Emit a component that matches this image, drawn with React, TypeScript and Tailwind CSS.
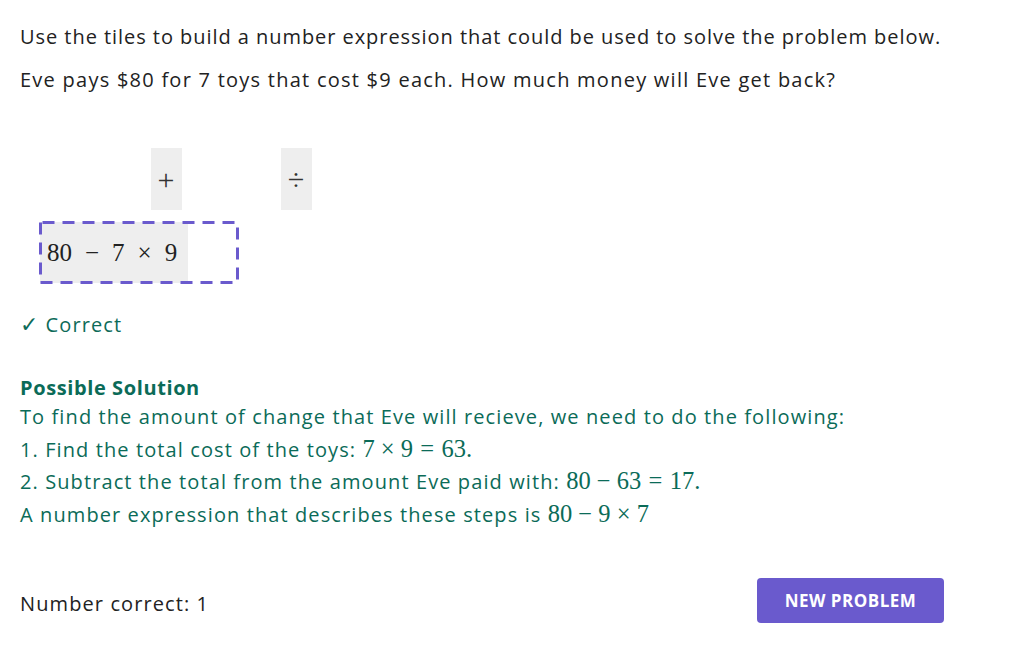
import React from "react";

const sans = { fontFamily: '"Open Sans", "DejaVu Sans", sans-serif' };
const serif = { fontFamily: '"Liberation Serif", "DejaVu Serif", serif' };

function B({ children }: { children: React.ReactNode }) {
  return <span className="mx-[0.25em]">{children}</span>;
}
function R({ children }: { children: React.ReactNode }) {
  return <span className="mx-[0.3em]">{children}</span>;
}
function M({ children }: { children: React.ReactNode }) {
  return (
    <span style={serif} className="text-[24.5px] leading-[20px] tracking-normal">
      {children}
    </span>
  );
}

export default function App() {
  return (
    <div className="w-[1032px] h-[645px] bg-white text-[#222] overflow-hidden tracking-[1.1px] whitespace-nowrap" style={sans}>
      <div className="pl-5 w-[944px]">
        <p className="pt-[23px] text-[20px] leading-[28px] tracking-[0.95px]">
          Use the tiles to build a number expression that could be used to solve the problem below.
        </p>
        <p className="mt-[15px] text-[20px] leading-[28px] tracking-[1.25px]">
          Eve pays $80 for 7 toys that cost $9 each. How much money will Eve get back?
        </p>

        <div className="mt-[54px] flex h-[62px]">
          <div className="ml-[131px] w-[31px] h-[62px] bg-[#eeeeee] flex items-center justify-center text-[30px] text-[#333]" style={serif}>
            +
          </div>
          <div className="ml-[99px] w-[31px] h-[62px] bg-[#eeeeee] flex items-center justify-center text-[30px] text-[#333]" style={serif}>
            ÷
          </div>
        </div>

        <div className="mt-[11px] ml-[19px] relative w-[200px] h-[63px] p-[1px]">
          <div className="w-[148px] h-[61px] bg-[#eeeeee] flex items-center pl-[7px] gap-[13px] text-[25px] text-[#222] tracking-normal" style={serif}>
            <span>80</span>
            <span>−</span>
            <span>7</span>
            <span>×</span>
            <span>9</span>
          </div>
          <svg className="absolute inset-0" width="200" height="63" viewBox="0 0 200 63">
            <rect x="1.5" y="1.5" width="197" height="60" fill="none" stroke="#6a5acd" strokeWidth="3" strokeDasharray="12 8" strokeDashoffset="-2" />
          </svg>
        </div>

        <p className="mt-[27px] text-[20px] leading-[28px] text-[#0d6b59]">
          <span style={{ fontFamily: '"DejaVu Sans", sans-serif' }} className="text-[22px] mr-[6px]">✓</span>Correct
        </p>

        <div className="mt-[35px] text-[#0b6b58]">
          <p className="text-[20px] leading-[27px] font-bold tracking-[0.6px]">Possible Solution</p>
          <p className="text-[20px] leading-[32.5px]">
            To find the amount of change that Eve will recieve, we need to do the following:
          </p>
          <p className="text-[20px] leading-[32.5px]">
            1. Find the total cost of the toys: <M>7<B>×</B>9<R>=</R>63.</M>
          </p>
          <p className="text-[20px] leading-[32.5px]">
            2. Subtract the total from the amount Eve paid with: <M>80<B>−</B>63<R>=</R>17.</M>
          </p>
          <p className="text-[20px] leading-[32.5px]">
            A number expression that describes these steps is <M>80<B>−</B>9<B>×</B>7</M>
          </p>
        </div>

        <div className="mt-[47px] flex items-center justify-between">
          <p className="text-[20px] leading-[28px] mt-[6px]">Number correct: 1</p>
          <button
            className="h-[45px] w-[187px] rounded-[4px] bg-[#6a5acd] text-white text-[17px] font-bold tracking-[0.5px] uppercase"
            style={{ fontFamily: '"Open Sans", sans-serif' }}
          >
            New Problem
          </button>
        </div>
      </div>
    </div>
  );
}
